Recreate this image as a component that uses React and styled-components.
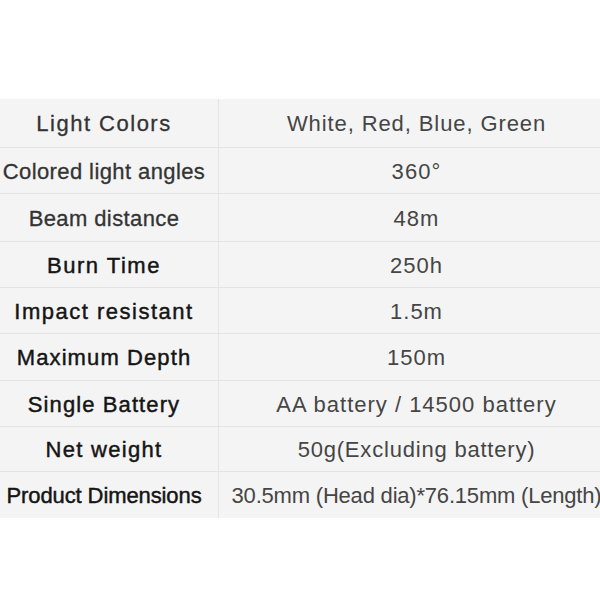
import styled, { createGlobalStyle } from "styled-components";

const GlobalStyle = createGlobalStyle`
  html, body {
    margin: 0;
    padding: 0;
    background: #ffffff;
    overflow: hidden;
  }
  body {
    width: 600px;
    height: 600px;
    font-family: "Liberation Sans", Arial, sans-serif;
  }
`;

const Page = styled.div`
  width: 600px;
  height: 600px;
  overflow: hidden;
  padding-top: 99px;
  box-sizing: border-box;
`;

const Table = styled.div`
  width: 624px;
  margin-left: -10px;
  background: #f4f4f4;
`;

const Row = styled.div`
  display: grid;
  grid-template-columns: 229px 1fr;
  height: ${(p) => p.$height}px;
  border-bottom: 1px solid #e4e4e4;
  box-sizing: border-box;
  &:last-child {
    border-bottom: none;
  }
`;

const Label = styled.div`
  display: flex;
  align-items: center;
  justify-content: center;
  padding-top: 2px;
  border-right: 1px solid #e4e4e4;
  font-size: 22px;
  white-space: nowrap;
  letter-spacing: ${(p) => p.$spacing}px;
  color: ${(p) => (p.$strong ? "#151515" : "#333333")};
  -webkit-text-stroke: ${(p) => (p.$strong ? "0.45px #151515" : "0.3px #333333")};
`;

const Value = styled.div`
  display: flex;
  align-items: center;
  justify-content: center;
  padding-top: 2px;
  font-size: 22px;
  white-space: nowrap;
  color: #454545;
  letter-spacing: ${(p) => p.$spacing}px;
`;

const specs = [
  { label: "Light Colors", value: "White, Red, Blue, Green", ls: 1.5, vs: 0.9, h: 49 },
  { label: "Colored light angles", value: "360°", ls: 0.4, vs: 1.1, h: 46 },
  { label: "Beam distance", value: "48m", ls: 0.4, vs: 1, h: 48 },
  { label: "Burn Time", value: "250h", ls: 1.5, vs: 1, h: 46, strong: true },
  { label: "Impact resistant", value: "1.5m", ls: 1.5, vs: 1, h: 46, strong: true },
  { label: "Maximum Depth", value: "150m", ls: 1.1, vs: 1, h: 47, strong: true },
  { label: "Single Battery", value: "AA battery / 14500 battery", ls: 1.1, vs: 1, h: 46, strong: true },
  { label: "Net weight", value: "50g(Excluding battery)", ls: 1.3, vs: 0.8, h: 45, strong: true },
  { label: "Product Dimensions", value: "30.5mm (Head dia)*76.15mm (Length)", ls: -0.1, vs: -0.2, h: 46, strong: true },
];

export default function App() {
  return (
    <>
      <GlobalStyle />
      <Page>
        <Table>
          {specs.map((s) => (
            <Row key={s.label} $height={s.h}>
              <Label $spacing={s.ls} $strong={s.strong}>
                {s.label}
              </Label>
              <Value $spacing={s.vs}>{s.value}</Value>
            </Row>
          ))}
        </Table>
      </Page>
    </>
  );
}
